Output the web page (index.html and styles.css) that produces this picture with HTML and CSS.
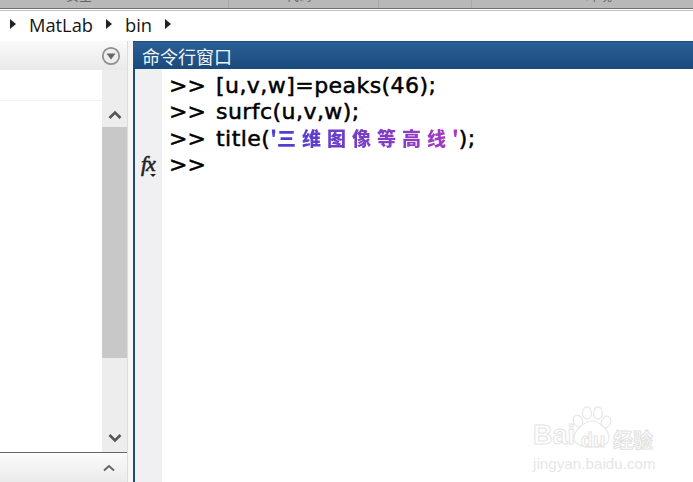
FILE: index.html
```html
<!DOCTYPE html>
<html lang="zh">
<head>
<meta charset="utf-8">
<title>MatLab 命令行窗口</title>
<link rel="stylesheet" href="styles.css">
</head>
<body>
<div class="app">
  <div class="ribbon">
    <span class="rb rb1">安全</span><i class="sep sep1"></i><span class="rb rb2">代码</span><span class="rb rb3">Simulink</span><span class="rb rb4">环境</span>
  </div>
  <nav class="address">
    <i class="tri"></i><span>MatLab</span><i class="tri"></i><span>bin</span><i class="tri"></i>
  </nav>
  <main class="desk">
    <section class="left">
      <header class="left-head">
        <svg class="menu-ic" width="20" height="20" viewBox="0 0 20 20"><circle cx="10" cy="10" r="8.2" fill="#eee" stroke="#8f8f8f" stroke-width="1.8"/><path d="M5.5 7.5h9L10 13.5z" fill="#666"/></svg>
      </header>
      <div class="left-body">
        <div class="list"><div class="list-top"></div></div>
        <div class="scroll">
          <div class="scroll-btn">
            <svg width="14" height="10" viewBox="0 0 14 10"><path d="M1.5 8L7 2.5 12.5 8" fill="none" stroke="#555" stroke-width="2.6"/></svg>
          </div>
          <div class="thumb"></div>
          <div class="track"></div>
          <div class="scroll-btn">
            <svg width="14" height="10" viewBox="0 0 14 10"><path d="M1.5 2L7 7.5 12.5 2" fill="none" stroke="#555" stroke-width="2.6"/></svg>
          </div>
        </div>
      </div>
      <footer class="left-foot">
        <svg width="12" height="8" viewBox="0 0 12 8"><path d="M1 6.5L6 2l5 4.5" fill="none" stroke="#666" stroke-width="2"/></svg>
      </footer>
    </section>
    <section class="cmd">
      <header class="cmd-title">命令行窗口</header>
      <div class="cmd-body">
        <div class="gutter"><span class="fx">fx</span><i class="fx-arrow"></i></div>
        <pre class="code"><span class="pr">&gt;&gt;</span>[u,v,w]=peaks(46);
<span class="pr">&gt;&gt;</span>surfc(u,v,w);
<span class="pr">&gt;&gt;</span>title(<span class="str"><span class="q">'</span>三维图像等高线<span class="q">'</span></span>);
<span class="pr">&gt;&gt;</span></pre>
      </div>
    </section>
  </main>
  <aside class="mark">
    <svg class="paw" width="40" height="42" viewBox="0 0 40 42"><g fill="#fff" stroke="#e8e8e8" stroke-width="1.2"><ellipse cx="6" cy="15" rx="4.5" ry="6" transform="rotate(-25 6 15)"/><ellipse cx="15" cy="7" rx="4.5" ry="6.2"/><ellipse cx="26" cy="7" rx="4.5" ry="6.2"/><ellipse cx="34" cy="16" rx="4.5" ry="6" transform="rotate(25 34 16)"/><path d="M20 15c7 0 17 9 17 17 0 7-8 9-17 9S2 39 2 32c0-8 11-17 18-17z"/></g></svg>
    <div class="mark-row"><span class="bai">Bai</span><span class="du">du</span><span class="jy">经验</span></div>
    <div class="mark-url">jingyan.baidu.com</div>
  </aside>
</div>
</body>
</html>
```
FILE: styles.css
```css
html, body { margin: 0; padding: 0; height: 100%; background: #fff; }
.app { position: relative; width: 693px; height: 482px; overflow: hidden; display: flex; flex-direction: column; font-family: "Open Sans", "Noto Sans CJK SC", sans-serif; }

.ribbon { height: 8px; flex: none; background: #b9b8b8; border-bottom: 1px solid #6f6f6f; box-shadow: 0 1px 0 #fff, 0 2px 0 #c4c0c0; position: relative; overflow: hidden; font: 13px "Noto Sans CJK SC", sans-serif; color: #666; }
.rb { position: absolute; top: -12px; line-height: 14px; }
.rb1 { left: 66px; }
.rb2 { left: 286px; }
.rb3 { left: 378px; width: 84px; padding: 0 4px; height: 30px; border-left: 1px solid #a8a8a8; border-right: 1px solid #a8a8a8; }
.rb4 { left: 586px; }
.sep { position: absolute; top: 0; height: 8px; width: 1px; background: #a8a8a8; }
.sep1 { left: 228px; }

.address { height: 26px; padding-bottom: 3px; margin-top: 2px; flex: none; display: flex; align-items: center; gap: 13px; padding-left: 10px; font-size: 18.3px; color: #151515; background: #fff; }
.tri { width: 0; height: 0; border-left: 6px solid #222; border-top: 5px solid transparent; border-bottom: 5px solid transparent; }

.desk { flex: 1; min-height: 0; display: flex; gap: 5px; background: #f6f6f6; margin-top: 1px; }

.left { width: 127px; flex: none; display: flex; flex-direction: column; border-right: 1px solid #ddd; }
.left-head { height: 29px; flex: none; display: flex; justify-content: flex-end; align-items: center; padding-right: 6px; background: linear-gradient(#fafafa, #e9e9e9); }
.left-body { flex: 1; min-height: 0; display: flex; border-bottom: 1px solid #666; }
.list { flex: 1; background: #fff; }
.list-top { height: 30px; border-bottom: 1px solid #f1f1f1; }
.scroll { width: 25px; flex: none; display: flex; flex-direction: column; background: #ededed; }
.scroll-btn { height: 28px; flex: none; display: flex; align-items: center; justify-content: center; }
.scroll-btn:first-child { height: 57px; padding-top: 33px; box-sizing: border-box; }
.thumb { height: 231px; flex: none; background: #c8c8c8; }
.track { flex: 1; }
.left-foot { height: 29px; flex: none; display: flex; justify-content: flex-end; align-items: center; padding-right: 12px; background: linear-gradient(#fbfbfb, #ebebeb); }

.cmd { flex: 1; min-width: 0; display: flex; flex-direction: column; }
.cmd-title { height: 27px; flex: none; padding-left: 9px; font: 18px/28px "Noto Sans CJK SC", sans-serif; color: #f1f5f9; background: linear-gradient(#2a6096, #1a4a7c); border-top: 1px solid #1d4e80; }
.cmd-body { flex: 1; min-height: 0; display: flex; border-left: 2px solid #1f4c75; background: #fff; }
.gutter { width: 27px; flex: none; background: #f0f0f2; position: relative; }
.fx { position: absolute; left: 6px; top: 84px; font: italic 22px/22px "Liberation Serif", serif; -webkit-text-stroke: .6px #222; color: #222; letter-spacing: -1px; }
.fx-arrow { position: absolute; left: 15px; top: 105px; width: 0; height: 0; border-top: 3px solid #222; border-left: 3px solid transparent; border-right: 3px solid transparent; }
.code { margin: 4px 0 0 7px; font: 22px/26px "DejaVu Sans", "Noto Sans CJK SC", sans-serif; letter-spacing: .45px; -webkit-text-stroke: .5px #000; color: #000; }
.pr { display: inline-block; width: 47px; letter-spacing: 0; }
.str { font-family: "Noto Sans CJK SC", sans-serif; font-weight: 900; font-size: 19px; letter-spacing: 6px; -webkit-text-stroke: 0; color: transparent; background: linear-gradient(90deg, #4a3fd0, #a63cc0); -webkit-background-clip: text; background-clip: text; }
.q { letter-spacing: 0; }

.mark { position: absolute; left: 533px; top: 406px; width: 125px; height: 70px; color: #e3e3e3; }
.paw { position: absolute; left: 39px; top: 0; }
.mark-row { position: absolute; left: 0; top: 14px; display: flex; align-items: center; font-family: "Liberation Sans", sans-serif; }
.bai { width: 42px; font-size: 27px; font-weight: 700; color: #fff; -webkit-text-stroke: 1px #e4e4e4; }
.du { width: 36px; position: relative; text-align: center; font-size: 20px; font-weight: 700; color: #fff; -webkit-text-stroke: 1px #e4e4e4; top: 5px; }
.jy { margin-left: 2px; position: relative; top: 4px; font: 700 20px "Noto Sans CJK SC", sans-serif; color: #fff; -webkit-text-stroke: 1px #e2e2e2; }
.mark-url { position: absolute; left: 0; top: 49px; font: 15px/18px "Liberation Sans", sans-serif; letter-spacing: .1px; color: #e6e6e6; white-space: nowrap; }
```
